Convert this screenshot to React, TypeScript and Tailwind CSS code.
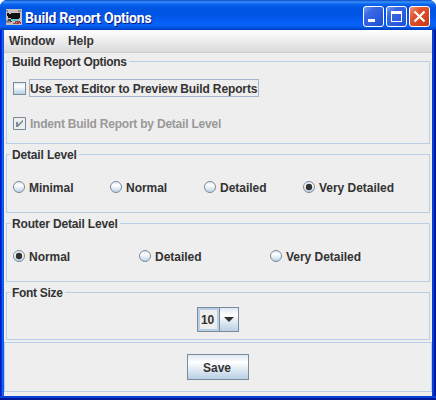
import type { ReactNode } from 'react';

function Group({ title, tracking, className, children }: { title: string; tracking: string; className: string; children: ReactNode }) {
  return (
    <section className={`relative ml-[2px] w-[424px] border border-[#b8cfe5] ${className}`}>
      <span className={`absolute left-[3px] -top-[8px] whitespace-nowrap bg-[#eee] px-[2px] leading-4 ${tracking}`}>{title}</span>
      {children}
    </section>
  );
}

function Radio({ label, checked, className }: { label: string; checked?: boolean; className: string }) {
  return (
    <label className={`flex shrink-0 items-center gap-[4px] ${className}`}>
      <svg width="12" height="12" viewBox="0 0 12 12" className="shrink-0">
        <defs>
          <linearGradient id="radioFill" x1="0" y1="0" x2="0" y2="1">
            <stop offset="0" stopColor="#dde8f3" />
            <stop offset=".35" stopColor="#ffffff" />
            <stop offset="1" stopColor="#b8cfe5" />
          </linearGradient>
        </defs>
        <circle cx="6" cy="6" r="5.5" fill="url(#radioFill)" stroke="#7a8a99" />
        {checked && <circle cx="6" cy="6" r="3.2" fill="#333" />}
      </svg>
      <span className="pt-[2px] leading-4 tracking-[-0.03px]">{label}</span>
    </label>
  );
}

function TitleButton({ kind }: { kind: 'min' | 'max' | 'close' }) {
  const close = kind === 'close';
  return (
    <svg width="21" height="21" viewBox="0 0 21 21">
      <defs>
        <linearGradient id="blueBtn" x1="0" y1="0" x2="1" y2="1">
          <stop offset="0" stopColor="#7d9ff3" />
          <stop offset=".3" stopColor="#3a68e4" />
          <stop offset="1" stopColor="#1d4fd6" />
        </linearGradient>
        <linearGradient id="redBtn" x1="0" y1="0" x2="1" y2="1">
          <stop offset="0" stopColor="#f0997f" />
          <stop offset=".35" stopColor="#e1532f" />
          <stop offset="1" stopColor="#c73a12" />
        </linearGradient>
      </defs>
      <rect x=".5" y=".5" width="20" height="20" rx="2.5" fill={close ? 'url(#redBtn)' : 'url(#blueBtn)'} stroke="#fff" />
      {kind === 'min' && <rect x="5" y="13" width="7" height="3" fill="#fff" />}
      {kind === 'max' && <path d="M5 5h11v11H5zM6 8v7h9V8z" fill="#fff" fillRule="evenodd" />}
      {close && <path d="M5.5 5.5l10 10M15.5 5.5l-10 10" stroke="#fff" strokeWidth="2.2" />}
    </svg>
  );
}

function AppIcon() {
  return (
    <svg width="16" height="16" viewBox="0 0 16 16" shapeRendering="crispEdges">
      <path fill="#c6bfc1" d="M0 0h16v16H0z" />
      <path fill="#8f8588" d="M0 1h2v2H0zM12 1h3v2h-3zM0 11h4v3H0z" />
      <path fill="#111" d="M1 4h2v1h2V4h9v5h-1v1H5V9H2V7H1z" />
      <path fill="#444" d="M2 10h3v2H2zM4 12h2v1H4z" />
      <path fill="#4fd0d4" d="M5 10h7v2H6v-1H5z" />
      <path fill="#a33c3c" d="M9 12h5v1h1v2H7v-1h2z" />
      <path fill="#d99" d="M10 13h1v1h-1zM13 14h1v1h-1z" />
    </svg>
  );
}

export default function App() {
  return (
    <div className="flex h-[400px] w-[436px] flex-col overflow-hidden bg-white font-['Liberation_Sans',Arial,sans-serif] text-[12px] font-bold text-[#333]">
      <div className="flex h-[400px] flex-col overflow-hidden rounded-t-[7px] bg-[linear-gradient(90deg,#0019cf_0,#0019cf_1px,#0831d9_1px,#0831d9_2px,#166aee_2px,#0855dd_4px,#0855dd_432px,#0441d8_432px,#0441d8_434px,#001ea0_434px,#00138c_436px)]">
        <header className="flex h-[30px] shrink-0 items-center bg-[linear-gradient(180deg,#0848c8_0,#3b91fb_2px,#0a66f0_4px,#0055e2_8px,#0055e5_15px,#0660f8_22px,#0560f5_26px,#0048ce_29px,#003db8_30px)] pl-[6px] pr-[6px] pt-[3px]">
          <AppIcon />
          <span className="ml-[3px] flex-1 whitespace-nowrap pt-[2px] font-[Roboto,sans-serif] text-[14px] leading-4 tracking-[-0.2px] text-white [text-shadow:1px_1px_#0a1883]">Build Report Options</span>
          <div className="flex gap-[2px]">
            <TitleButton kind="min" />
            <TitleButton kind="max" />
            <TitleButton kind="close" />
          </div>
        </header>
        <div className="ml-[4px] flex h-[366px] w-[428px] shrink-0 flex-col bg-[#eee]">
          <nav className="flex h-[23px] shrink-0 items-center gap-[13px] border-b border-[#ccc] bg-gradient-to-b from-white to-[#dadada] pl-[5px]">
            <span>Window</span>
            <span>Help</span>
          </nav>
          <Group title="Build Report Options" tracking="tracking-[-0.3px]" className="mt-[8px] h-[83px]">
            <div className="flex flex-col pl-[6px] pt-[17px]">
              <div className="flex h-[18px] items-center gap-[3px]">
                <span className="size-[13px] border border-[#7a8a99] bg-[linear-gradient(180deg,#dde8f3,#fff_30%,#b8cfe5)]" />
                <span className="h-[18px] w-[230px] whitespace-nowrap border border-[#a3b8cc] leading-[18px] tracking-[-0.13px]">Use Text Editor to Preview Build Reports</span>
              </div>
              <div className="mt-[17px] flex h-[18px] items-center gap-[4px] text-[#999]">
                <svg width="13" height="13" viewBox="0 0 13 13">
                  <path d="M.5.5h12v12H.5z" fill="none" stroke="#7a8a99" />
                  <path d="M3 5h2v2.6L10 2.8v2L5 10H3z" fill="#7a8a99" />
                </svg>
                <span className="pt-[2px] leading-4 tracking-[-0.22px]">Indent Build Report by Detail Level</span>
              </div>
            </div>
          </Group>
          <Group title="Detail Level" tracking="tracking-[-0.16px]" className="mt-[10px] h-[59px]">
            <div className="flex pl-[6px] pt-[23px]">
              <Radio label="Minimal" className="w-[97px]" />
              <Radio label="Normal" className="w-[94px]" />
              <Radio label="Detailed" className="w-[99px]" />
              <Radio label="Very Detailed" checked className="" />
            </div>
          </Group>
          <Group title="Router Detail Level" tracking="tracking-[-0.16px]" className="mt-[10px] h-[59px]">
            <div className="flex pl-[6px] pt-[23px]">
              <Radio label="Normal" checked className="w-[126px]" />
              <Radio label="Detailed" className="w-[131px]" />
              <Radio label="Very Detailed" className="" />
            </div>
          </Group>
          <Group title="Font Size" tracking="tracking-[-0.3px]" className="mt-[10px] h-[48px]">
            <div className="ml-[190px] mt-[14px] flex h-[25px] w-[42px] border border-[#7a8a99]">
              <span className="w-[21px] border-2 border-[#b8cfe5] pl-[1px] leading-[20px] tracking-[-0.2px]">10</span>
              <span className="flex flex-1 items-center justify-center border-l border-[#7a8a99] bg-[linear-gradient(180deg,#dde8f3,#fff_30%,#b8cfe5)]">
                <svg width="10" height="5" viewBox="0 0 10 5"><path d="M0 0h10L5 5z" fill="#333" /></svg>
              </span>
            </div>
          </Group>
          <section className="mt-[2px] flex h-[50px] justify-center border border-[#b8cfe5] pt-[11px]">
            <button className="h-[26px] w-[62px] border border-[#7a8a99] bg-[linear-gradient(180deg,#dde8f3,#fff_30%,#b8cfe5)] pr-[2px] pt-[2px] leading-4">Save</button>
          </section>
        </div>
        <div className="h-[4px] shrink-0 bg-[linear-gradient(180deg,#0441d8_0,#0441d8_2px,#001ea0_2px,#00138c_4px)]" />
      </div>
    </div>
  );
}
